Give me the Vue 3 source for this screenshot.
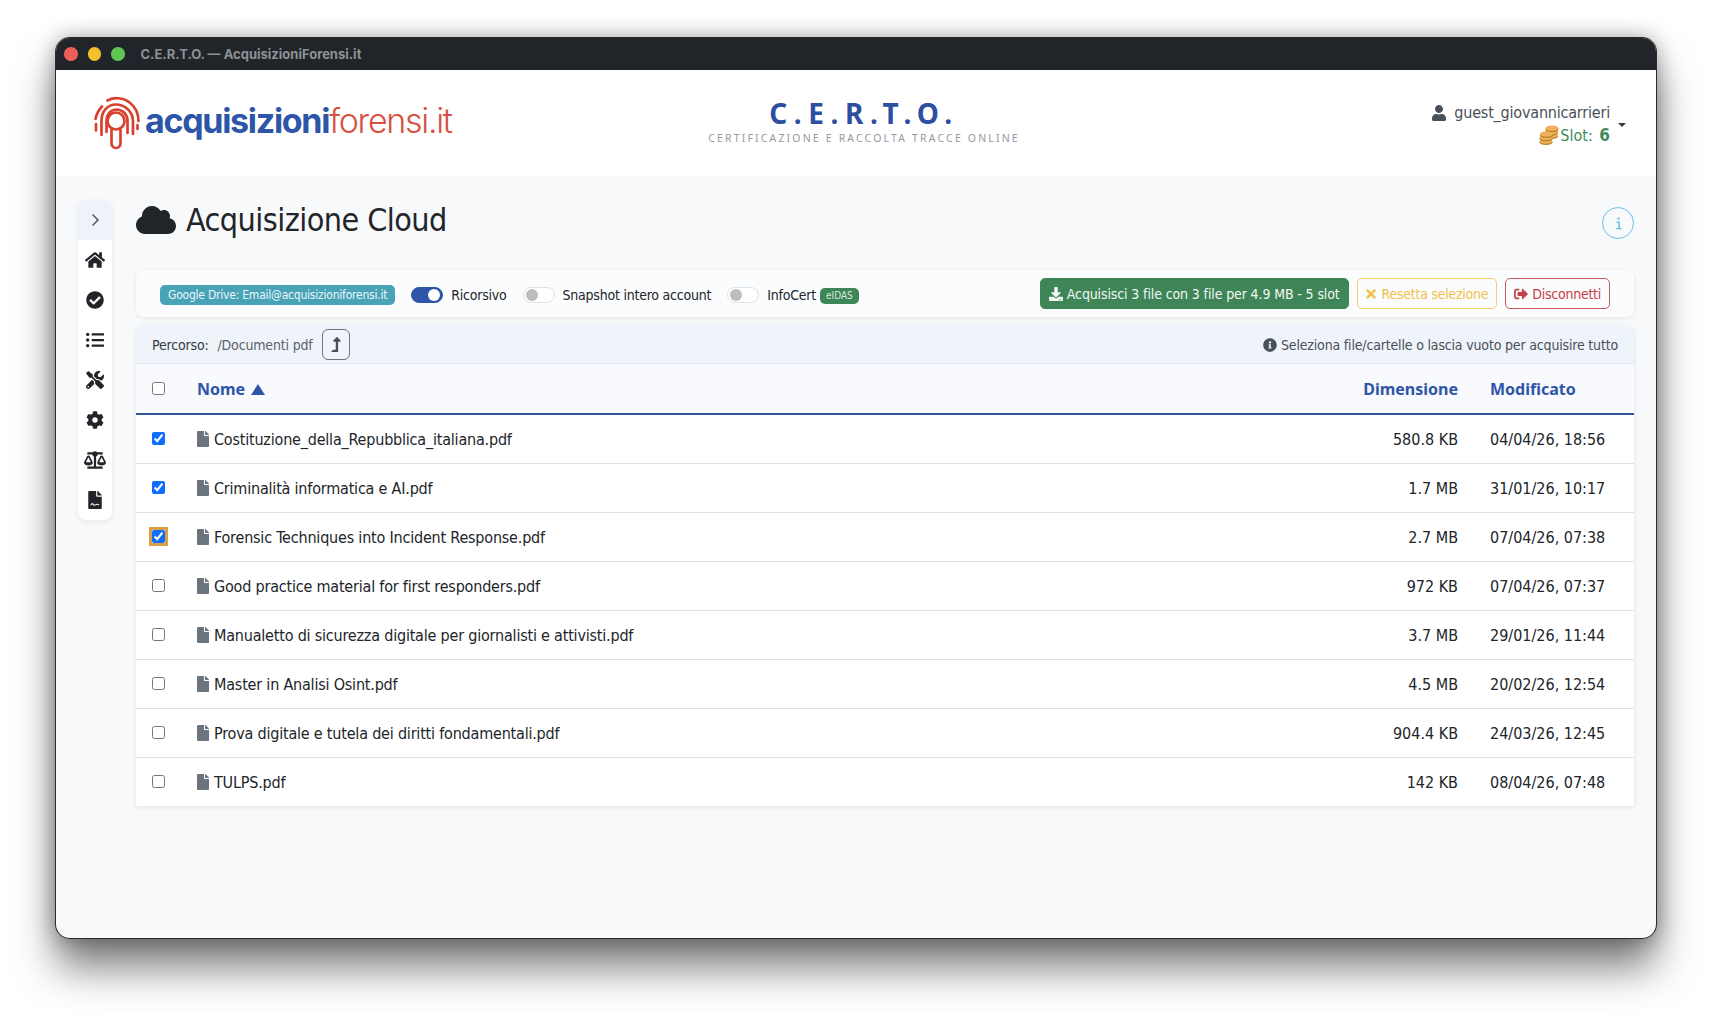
<script setup>
const icons = {
  home: ['0 0 576 512', 'M280.37 148.26L96 300.11V464a16 16 0 0 0 16 16l112.06-.29a16 16 0 0 0 15.92-16V368a16 16 0 0 1 16-16h64a16 16 0 0 1 16 16v95.64a16 16 0 0 0 16 16.05L464 480a16 16 0 0 0 16-16V300L295.67 148.26a12.19 12.19 0 0 0-15.3 0zM571.6 251.47L488 182.56V44.05a12 12 0 0 0-12-12h-56a12 12 0 0 0-12 12v72.61L318.47 43a48 48 0 0 0-61 0L4.34 251.47a12 12 0 0 0-1.6 16.9l25.5 31A12 12 0 0 0 45.15 301l235.22-193.74a12.19 12.19 0 0 1 15.3 0L530.9 301a12 12 0 0 0 16.9-1.6l25.5-31a12 12 0 0 0-1.7-16.93z'],
  check: ['0 0 512 512', 'M504 256c0 136.967-111.033 248-248 248S8 392.967 8 256 119.033 8 256 8s248 111.033 248 248zM227.314 387.314l184-184c6.248-6.248 6.248-16.379 0-22.627l-22.627-22.627c-6.248-6.249-16.379-6.249-22.628 0L216 308.118l-70.059-70.059c-6.248-6.248-16.379-6.248-22.628 0l-22.627 22.627c-6.248 6.248-6.248 16.379 0 22.627l104 104c6.249 6.249 16.379 6.249 22.628.001z'],
  list: ['0 0 512 512', 'M48 48a48 48 0 1 0 48 48 48 48 0 0 0-48-48zm0 160a48 48 0 1 0 48 48 48 48 0 0 0-48-48zm0 160a48 48 0 1 0 48 48 48 48 0 0 0-48-48zm448 16H176a16 16 0 0 0-16 16v32a16 16 0 0 0 16 16h320a16 16 0 0 0 16-16v-32a16 16 0 0 0-16-16zm0-320H176a16 16 0 0 0-16 16v32a16 16 0 0 0 16 16h320a16 16 0 0 0 16-16V80a16 16 0 0 0-16-16zm0 160H176a16 16 0 0 0-16 16v32a16 16 0 0 0 16 16h320a16 16 0 0 0 16-16v-32a16 16 0 0 0-16-16z'],
  tools: ['0 0 512 512', 'M501.1 395.7L384 278.6c-23.1-23.1-57.6-27.6-85.4-13.9L192 158.1V96L64 0 0 64l96 128h62.1l106.6 106.6c-13.6 27.8-9.2 62.3 13.9 85.4l117.1 117.1c14.6 14.6 38.2 14.6 52.7 0l52.7-52.7c14.5-14.6 14.5-38.2 0-52.7zM331.7 225c28.3 0 54.9 11 74.9 31l19.4 19.4c15.8-6.9 30.8-16.5 43.8-29.5 37.1-37.1 49.7-89.3 37.9-136.7-2.2-9-13.5-12.1-20.1-5.5l-74.4 74.4-67.9-11.3L334 98.9l74.4-74.4c6.6-6.6 3.4-17.9-5.7-20.2-47.4-11.7-99.6.9-136.6 37.9-28.5 28.5-41.9 66.1-41.2 103.6l82.1 82.1c8.1-1.9 16.5-2.9 24.7-2.9zm-103.9 82l-56.7-56.7L18.7 402.8c-25 25-25 65.5 0 90.5s65.5 25 90.5 0l123.6-123.6c-7.6-19.9-9.9-41.6-5-62.7zM64 472c-13.2 0-24-10.8-24-24 0-13.3 10.7-24 24-24s24 10.7 24 24c0 13.2-10.7 24-24 24z'],
  cog: ['0 0 512 512', 'M487.4 315.7l-42.6-24.6c4.3-23.2 4.3-47 0-70.2l42.6-24.6c4.9-2.8 7.1-8.6 5.5-14-11.1-35.6-30-67.8-54.7-94.6-3.8-4.1-10-5.1-14.8-2.3L380.8 110c-17.9-15.4-38.5-27.3-60.8-35.1V25.8c0-5.6-3.9-10.5-9.4-11.7-36.7-8.2-74.3-7.8-109.2 0-5.5 1.2-9.4 6.1-9.4 11.7V75c-22.2 7.9-42.8 19.8-60.8 35.1L88.7 85.5c-4.9-2.8-11-1.9-14.8 2.3-24.7 26.7-43.6 58.9-54.7 94.6-1.7 5.4.6 11.2 5.5 14L67.3 221c-4.3 23.2-4.3 47 0 70.2l-42.6 24.6c-4.9 2.8-7.1 8.6-5.5 14 11.1 35.6 30 67.8 54.7 94.6 3.8 4.1 10 5.1 14.8 2.3l42.6-24.6c17.9 15.4 38.5 27.3 60.8 35.1v49.2c0 5.6 3.9 10.5 9.4 11.7 36.7 8.2 74.3 7.8 109.2 0 5.5-1.2 9.4-6.1 9.4-11.7v-49.2c22.2-7.9 42.8-19.8 60.8-35.1l42.6 24.6c4.9 2.8 11 1.9 14.8-2.3 24.7-26.7 43.6-58.9 54.7-94.6 1.5-5.5-.7-11.3-5.6-14.1zM256 336c-44.1 0-80-35.9-80-80s35.9-80 80-80 80 35.9 80 80-35.9 80-80 80z'],
  scale: ['0 0 640 512', 'M256 336h-.02c0-16.18 1.34-8.73-85.05-181.51-17.65-35.29-68.19-35.36-85.87 0C-2.06 328.75.02 320.33.02 336H0c0 44.18 57.31 80 128 80s128-35.82 128-80zM128 176l72 144H56l72-144zm511.98 160c0-16.18 1.34-8.73-85.05-181.51-17.65-35.29-68.19-35.36-85.87 0-87.12 174.26-85.04 165.84-85.04 181.51H384c0 44.18 57.31 80 128 80s128-35.82 128-80h-.02zM440 320l72-144 72 144H440zm88 128H352V153.25c23.51-10.3 41.16-31.48 46.39-57.25H528c8.84 0 16-7.16 16-16V48c0-8.84-7.16-16-16-16H383.64C369.04 12.68 346.09 0 320 0s-49.04 12.68-63.64 32H112c-8.84 0-16 7.16-16 16v32c0 8.84 7.16 16 16 16h129.61c5.23 25.76 22.87 46.95 46.39 57.25V448H112c-8.84 0-16 7.16-16 16v32c0 8.84 7.16 16 16 16h416c8.84 0 16-7.16 16-16v-32c0-8.84-7.16-16-16-16z'],
  file: ['0 0 384 512', 'M224 136V0H24C10.7 0 0 10.7 0 24v464c0 13.3 10.7 24 24 24h336c13.3 0 24-10.7 24-24V160H248c-13.2 0-24-10.8-24-24zM384 121.9V128H256V0h6.1c6.4 0 12.5 2.5 17 7l97.9 98c4.5 4.5 7 10.6 7 16.9z'],
  download: ['0 0 512 512', 'M216 0h80c13.3 0 24 10.7 24 24v168h87.7c17.8 0 26.7 21.5 14.1 34.1L269.7 378.3c-7.5 7.5-19.8 7.5-27.3 0L90.1 226.1c-12.6-12.6-3.7-34.1 14.1-34.1H192V24c0-13.3 10.7-24 24-24zm296 376v112c0 13.3-10.7 24-24 24H24c-13.3 0-24-10.7-24-24V376c0-13.3 10.7-24 24-24h146.7l49 49c20.1 20.1 52.5 20.1 72.6 0l49-49H488c13.3 0 24 10.7 24 24zm-124 88c0-11-9-20-20-20s-20 9-20 20 9 20 20 20 20-9 20-20zm64 0c0-11-9-20-20-20s-20 9-20 20 9 20 20 20 20-9 20-20z'],
  times: ['0 0 352 512', 'M242.72 256l100.07-100.07c12.28-12.28 12.28-32.19 0-44.48l-22.24-22.24c-12.28-12.28-32.19-12.28-44.48 0L176 189.28 75.93 89.21c-12.28-12.28-32.19-12.28-44.48 0L9.21 111.45c-12.28 12.28-12.28 32.19 0 44.48L109.28 256 9.21 356.07c-12.28 12.28-12.28 32.19 0 44.48l22.24 22.24c12.28 12.28 32.2 12.28 44.48 0L176 322.72l100.07 100.07c12.28 12.28 32.2 12.28 44.48 0l22.24-22.24c12.28-12.28 12.28-32.19 0-44.48L242.72 256z'],
  signout: ['0 0 512 512', 'M497 273L329 441c-15 15-41 4.5-41-17v-96H152c-13.3 0-24-10.7-24-24v-96c0-13.3 10.7-24 24-24h136V88c0-21.4 25.9-32 41-17l168 168c9.3 9.4 9.3 24.6 0 34zM192 436v-40c0-6.6-5.4-12-12-12H96c-17.7 0-32-14.3-32-32V160c0-17.7 14.3-32 32-32h84c6.6 0 12-5.4 12-12V76c0-6.6-5.4-12-12-12H96c-53 0-96 43-96 96v192c0 53 43 96 96 96h84c6.6 0 12-5.4 12-12z'],
  info: ['0 0 512 512', 'M256 8C119.043 8 8 119.083 8 256c0 136.997 111.043 248 248 248s248-111.003 248-248C504 119.083 392.957 8 256 8zm0 110c23.196 0 42 18.804 42 42s-18.804 42-42 42-42-18.804-42-42 18.804-42 42-42zm56 254c0 6.627-5.373 12-12 12h-88c-6.627 0-12-5.373-12-12v-24c0-6.627 5.373-12 12-12h12v-64h-12c-6.627 0-12-5.373-12-12v-24c0-6.627 5.373-12 12-12h64c6.627 0 12 5.373 12 12v100h12c6.627 0 12 5.373 12 12v24z'],
  user: ['0 0 448 512', 'M224 256c70.7 0 128-57.3 128-128S294.7 0 224 0 96 57.3 96 128s57.3 128 128 128zm89.6 32h-16.7c-22.2 10.2-46.9 16-72.9 16s-50.6-5.8-72.9-16h-16.7C60.2 288 0 348.2 0 422.4V464c0 26.5 21.5 48 48 48h352c26.5 0 48-21.5 48-48v-41.6c0-74.2-60.2-134.4-134.4-134.4z'],
  cloud: ['0 0 640 512', 'M537.6 226.6c4.1-10.7 6.4-22.4 6.4-34.6 0-53-43-96-96-96-19.7 0-38.1 6-53.3 16.2C367 64.2 315.3 32 256 32c-88.4 0-160 71.6-160 160 0 2.7.1 5.4.2 8.1C40.2 219.8 0 273.2 0 336c0 79.5 64.5 144 144 144h368c70.7 0 128-57.3 128-128 0-61.9-44-113.6-102.4-125.4z'],
  up: ['0 0 320 512', 'M313.553 119.669L209.587 7.666c-9.485-10.214-25.676-10.229-35.174 0L70.438 119.669C56.232 134.969 67.062 160 88.025 160H152v272H68.024a11.996 11.996 0 0 0-8.485 3.515l-56 56C-4.021 499.074 1.333 512 12.024 512h196c13.255 0 24-10.745 24-24V160h63.966c20.878 0 31.851-24.969 17.563-40.331z']
}
const navIcons = ['home', 'check', 'list', 'tools', 'cog', 'scale', 'file']
const coinDiscs = [
  [12.5, 10], [12.5, 6.5], [13, 3.2], [7, 16], [7, 12.5], [7.500, 9]
]
const files = [
  { name: 'Costituzione_della_Repubblica_italiana.pdf', size: '580.8 KB', date: '04/04/26, 18:56', on: true },
  { name: 'Criminalità informatica e AI.pdf', size: '1.7 MB', date: '31/01/26, 10:17', on: true },
  { name: 'Forensic Techniques into Incident Response.pdf', size: '2.7 MB', date: '07/04/26, 07:38', on: true, focus: true },
  { name: 'Good practice material for first responders.pdf', size: '972 KB', date: '07/04/26, 07:37' },
  { name: 'Manualetto di sicurezza digitale per giornalisti e attivisti.pdf', size: '3.7 MB', date: '29/01/26, 11:44' },
  { name: 'Master in Analisi Osint.pdf', size: '4.5 MB', date: '20/02/26, 12:54' },
  { name: 'Prova digitale e tutela dei diritti fondamentali.pdf', size: '904.4 KB', date: '24/03/26, 12:45' },
  { name: 'TULPS.pdf', size: '142 KB', date: '08/04/26, 07:48' }
]
</script>

<template>
  <div class="page">
    <div class="window">
      <div class="titlebar">
        <span class="light red"></span><span class="light yellow"></span><span class="light green"></span>
        <span class="wintitle">C.E.R.T.O. — AcquisizioniForensi.it</span>
      </div>

      <header class="header">
        <div class="logo">
          <svg class="mark" viewBox="0 0 56 58">
            <path d="M19.500 6.500C26 3 35 3.500 41 8C47 12.500 50.500 19 50.500 27" />
            <path d="M7.500 25C8.500 20 10.500 16 14 12.500" />
            <path d="M13.500 41V27C13.500 16.500 20 10.500 28 10.500C36 10.500 44.500 16.500 45 27V40" />
            <path d="M8 30V36.500M49.500 31V35" />
            <path d="M18.500 38V27C18.500 20.500 22.500 15.500 28.500 15.500C34.500 15.500 39.500 20.500 39.500 27V39" />
            <circle cx="28" cy="27" r="8.500" />
            <path d="M23.500 36V49C23.500 52 25.500 54 28 54C30.500 54 32.500 52 32.500 49V36" />
          </svg>
          <span class="logotext"><b>acquisizioni</b><span>forensi.it</span></span>
        </div>
        <div class="brand">
          <div class="brandname">C.E.R.T.O.</div>
          <div class="brandsub">CERTIFICAZIONE E RACCOLTA TRACCE ONLINE</div>
        </div>
        <div class="account">
          <div class="accountlines">
            <div class="username">
              <svg class="ico-user" :viewBox="icons.user[0]"><path :d="icons.user[1]" /></svg>
              <span>guest_giovannicarrieri</span>
            </div>
            <div class="slots">
              <svg class="ico-coins" viewBox="0 0 20 20">
                <g v-for="(d, i) in coinDiscs" :key="i">
                  <ellipse :cx="d[0]" :cy="d[1] + 1.2" rx="6.500" ry="2.800" fill="#b87e2a" />
                  <ellipse :cx="d[0]" :cy="d[1]" rx="6.500" ry="2.800" fill="#efb25c" />
                </g>
              </svg>
              <span>Slot: <b>6</b></span>
            </div>
          </div>
          <span class="caret"></span>
        </div>
      </header>

      <div class="main">
        <nav class="sidebar">
          <div class="toggle">
            <svg viewBox="0 0 16 16"><path d="M5.500 2.500 11 8l-5.500 5.500" fill="none" stroke="#444c54" stroke-width="1.400" /></svg>
          </div>
          <div class="navlist">
            <div v-for="n in navIcons" :key="n" class="navitem">
              <svg :class="'nav-' + n" :viewBox="icons[n][0]"><path :d="icons[n][1]" /><path v-if="n === 'file'" d="M70 400c30-50 50-50 70-20s40 30 70 5 60-10 100 10" fill="none" stroke="#fff" stroke-width="30" /></svg>
            </div>
          </div>
        </nav>

        <section class="content">
          <div class="headline">
            <div class="pagetitle">
              <svg class="ico-cloud" :viewBox="icons.cloud[0]"><path :d="icons.cloud[1]" /></svg>
              <h1>Acquisizione Cloud</h1>
            </div>
            <div class="infobtn">
              <svg viewBox="0 0 16 16"><circle cx="8" cy="2.800" r="1.200" fill="#5bbfdd" /><path d="M5.800 6.500H8.700V13.500M5.600 13.500H11" fill="none" stroke="#5bbfdd" stroke-width="1.500" /></svg>
            </div>
          </div>

          <div class="toolbar">
            <div class="options">
              <span class="drive">Google Drive: Email@acquisizioniforensi.it</span>
              <label class="opt"><span class="switch on"></span>Ricorsivo</label>
              <label class="opt"><span class="switch"></span>Snapshot intero account</label>
              <label class="opt"><span class="switch"></span>InfoCert <span class="eidas">eIDAS</span></label>
            </div>
            <div class="actions">
              <button class="btn go">
                <svg :viewBox="icons.download[0]"><path :d="icons.download[1]" /></svg>
                Acquisisci 3 file con 3 file per 4.9 MB - 5 slot
              </button>
              <button class="btn reset">
                <svg class="x" :viewBox="icons.times[0]"><path :d="icons.times[1]" /></svg>
                Resetta selezione
              </button>
              <button class="btn off">
                <svg :viewBox="icons.signout[0]"><path :d="icons.signout[1]" /></svg>
                Disconnetti
              </button>
            </div>
          </div>

          <div class="panel">
            <div class="pathbar">
              <div class="pathleft">
                <span class="pathlabel">Percorso:</span>
                <span class="pathval">/Documenti pdf</span>
                <button class="upbtn"><svg :viewBox="icons.up[0]"><path :d="icons.up[1]" /></svg></button>
              </div>
              <div class="hint">
                <svg :viewBox="icons.info[0]"><path :d="icons.info[1]" /></svg>
                <span>Seleziona file/cartelle o lascia vuoto per acquisire tutto</span>
              </div>
            </div>
            <div class="thead">
              <div class="c-check"><input type="checkbox" class="cb" /></div>
              <div class="c-name">Nome <span class="sort"></span></div>
              <div class="c-size">Dimensione</div>
              <div class="c-date">Modificato</div>
            </div>
            <div v-for="f in files" :key="f.name" class="row">
              <div class="c-check"><input type="checkbox" class="cb" :class="{ focus: f.focus }" :checked="f.on" /></div>
              <div class="c-name rowname">
                <svg class="ico-file" :viewBox="icons.file[0]"><path :d="icons.file[1]" /></svg>
                <span>{{ f.name }}</span>
              </div>
              <div class="c-size">{{ f.size }}</div>
              <div class="c-date">{{ f.date }}</div>
            </div>
          </div>
        </section>
      </div>
    </div>
  </div>
</template>

<style>
html, body { margin: 0; background: #fff; }
</style>

<style scoped>
.page {
  width: 1712px;
  height: 1012px;
  padding-top: 38px;
  box-sizing: border-box;
  background: #fff;
  overflow: hidden;
  font-family: "DejaVu Sans Condensed", "Noto Sans", sans-serif;
  color: #212529;
}
svg { display: block; fill: currentColor; }
.window {
  width: 1600px;
  height: 900px;
  margin: 0 auto;
  border-radius: 14px;
  overflow: hidden;
  background: #f8f9fb;
  box-shadow: 0 0 0 1px #2a2a2a, 0 30px 40px rgba(0,0,0,.5), 0 0 22px rgba(0,0,0,.36);
  display: flex;
  flex-direction: column;
}
.titlebar {
  height: 32px;
  background: #212529;
  display: flex;
  align-items: center;
  padding-left: 8px;
  gap: 10px;
  flex: none;
}
.light { width: 13.5px; height: 13.5px; border-radius: 50%; }
.red { background: #ec5f57; }
.yellow { background: #f5bf2e; }
.green { background: #5fc454; }
.wintitle {
  margin-left: 6px;
  font: 700 13px "Inter", sans-serif;
  color: #8d9195;
}
.header {
  height: 106px;
  flex: none;
  background: #fff;
  display: grid;
  grid-template-columns: 1fr auto 1fr;
  align-items: center;
  padding: 0 30px 0 32px;
}
.logo { display: flex; align-items: center; gap: 1px; }
.mark {
  width: 56px;
  height: 58px;
  fill: none;
  stroke: #d8412f;
  stroke-width: 2.700;
  stroke-linecap: round;
}
.logotext {
  font-family: "Inter", sans-serif;
  font-size: 34px;
  letter-spacing: -1.3px;
  color: #d8503f;
  font-weight: 300;
  margin-top: -5px;
}
.logotext b { color: #2d55a8; font-weight: 700; }
.brand { text-align: center; margin: -7px 0 0 14px; }
.brandname {
  color: #2c4fa1;
  font: 700 28px/36px "Noto Sans", sans-serif;
  letter-spacing: 6.6px;
}
.brandsub {
  color: #959a9f;
  font: 400 10.5px/14px "Noto Sans", sans-serif;
  letter-spacing: 2.17px;
}
.account { justify-self: end; display: flex; align-items: flex-end; margin-top: 1px; }
.accountlines { display: flex; flex-direction: column; align-items: flex-end; gap: 0; }
.username, .slots { display: flex; align-items: center; height: 22px; font-size: 16px; }
.username { color: #495057; letter-spacing: -.2px; }
.slots { color: #3e8a5c; font-size: 16px; }
.slots b { font-weight: 700; font-size: 17px; margin-left: 2px; }
.ico-user { width: 14px; height: 16px; color: #495057; margin-right: 8px; }
.ico-coins { width: 20px; height: 20px; margin-right: 1px; }
.caret {
  width: 0; height: 0;
  border: 4px solid transparent;
  border-top-color: #343a40;
  border-bottom: 0;
  margin: 0 0 19px 8px;
}
.main {
  flex: 1;
  display: flex;
  gap: 24px;
  padding: 24px 22px 0;
  min-height: 0;
}
.sidebar {
  width: 34px;
  height: 320px;
  flex: none;
  background: #fff;
  border-radius: 8px;
  box-shadow: 0 2px 6px rgba(0,0,0,.07);
  overflow: hidden;
}
.toggle {
  height: 40px;
  background: #eef3fb;
  display: flex;
  align-items: center;
  justify-content: center;
}
.toggle svg { width: 16px; height: 16px; }
.navitem { height: 40px; display: flex; align-items: center; justify-content: center; color: #212529; }
.navitem svg { width: 20px; height: 18px; }
.navitem .nav-check { width: 18px; height: 18px; }
.navitem .nav-file { width: 14px; height: 18px; }
.navitem .nav-scale { width: 22px; height: 18px; }
.content { flex: 1; min-width: 0; display: flex; flex-direction: column; }
.headline {
  height: 70px;
  flex: none;
  display: flex;
  justify-content: space-between;
  align-items: flex-start;
}
.pagetitle { display: flex; align-items: center; gap: 10px; height: 40px; }
.ico-cloud { width: 40px; height: 32px; color: #212529; }
h1 { margin: 0; font-size: 32px; font-weight: 400; line-height: 40px; color: #212529; letter-spacing: -.55px; }
.infobtn {
  width: 32px; height: 32px;
  border: 1px solid #6cc5e4;
  border-radius: 50%;
  margin-top: 7px;
  box-sizing: border-box;
  display: flex; align-items: center; justify-content: center;
}
.infobtn svg { width: 15px; height: 15px; }
.toolbar {
  height: 47px;
  flex: none;
  background: #fbfcfd;
  border-radius: 8px;
  box-shadow: 0 1px 4px rgba(0,0,0,.08);
  display: flex;
  align-items: center;
  justify-content: space-between;
  padding: 0 24px;
  box-sizing: border-box;
}
.options { display: flex; align-items: center; gap: 16px; font-size: 14px; letter-spacing: -.22px; margin-top: 2px; }
.drive {
  background: #48a3b7;
  color: #eaf6f8;
  font-size: 12px;
  line-height: 20px;
  border-radius: 5px;
  padding: 0 8px;
}
.opt { display: flex; align-items: center; gap: 8px; color: #212529; }
.switch {
  width: 32px; height: 16px;
  border-radius: 8px;
  border: 1px solid #dfe2e5;
  background: #fff;
  box-sizing: border-box;
  position: relative;
}
.switch::after {
  content: "";
  position: absolute;
  left: 2px; top: 1px;
  width: 12px; height: 12px;
  border-radius: 50%;
  background: #bdbdbd;
}
.switch.on { background: #2d55a8; border-color: #2d55a8; }
.switch.on::after { left: auto; right: 2px; background: #fff; }
.eidas {
  background: #3e8557;
  color: #d9ebdf;
  font-size: 10px;
  line-height: 16px;
  letter-spacing: 0;
  border-radius: 5px;
  padding: 0 6px;
  margin: 3px 0 0 -4px;
}
.actions { display: flex; gap: 8px; }
.btn {
  height: 31px;
  padding: 0 8px;
  border-radius: 5px;
  font: 400 14px "DejaVu Sans Condensed", "Noto Sans", sans-serif;
  letter-spacing: -.25px;
  display: flex;
  align-items: center;
  gap: 4px;
  background: transparent;
  border: 1px solid;
  box-sizing: border-box;
  white-space: nowrap;
}
.btn svg { width: 14px; height: 14px; }
.btn .x { width: 10px; height: 14px; margin-right: 2px; }
.go { background: #3e8557; border-color: #3e8557; color: #f3f8f5; letter-spacing: -.12px; }
.reset { border-color: #f3cf6a; color: #f0c14a; }
.off { border-color: #c95a5f; color: #c4414a; }
.panel { margin-top: 8px; background: #fff; border-radius: 8px 8px 0 0; box-shadow: 0 1px 4px rgba(0,0,0,.1); }
.pathbar {
  height: 39px;
  box-sizing: border-box;
  background: #eff3fa;
  border-bottom: 1px solid #dfe6f3;
  border-radius: 8px 8px 0 0;
  display: flex;
  align-items: center;
  justify-content: space-between;
  padding: 0 16px;
  font-size: 14px;
  letter-spacing: -.17px;
}
.pathleft { display: flex; align-items: center; }
.pathlabel { color: #343a40; margin-top: 2px; }
.pathval { color: #5c636a; margin: 2px 9px 0; }
.upbtn {
  width: 28px; height: 31px;
  border: 1px solid #6c757d;
  border-radius: 6px;
  background: transparent;
  display: flex; align-items: center; justify-content: center;
  color: #495057;
  padding: 0;
}
.upbtn svg { width: 10px; height: 15px; }
.hint { display: flex; align-items: center; gap: 4px; color: #495057; margin-top: 2px; }
.hint svg { width: 14px; height: 14px; }
.thead, .row {
  display: grid;
  grid-template-columns: 61px 1fr 146px 176px;
  align-items: center;
}
.thead {
  height: 51px;
  box-sizing: border-box;
  background: #f8fafd;
  border-bottom: 2px solid #2d5593;
  color: #2d55a8;
  font: 700 16px "Noto Sans", sans-serif;
}
.row { height: 49px; box-sizing: border-box; border-bottom: 1px solid #dee2e6; font-size: 16px; background: #fff; color: #212529; }
.row:last-child { border-bottom: 0; height: 48px; }
.c-check { padding-left: 16px; display: flex; align-items: center; }
.row .c-check { margin-top: -2px; }
.c-size { text-align: right; }
.c-date { padding-left: 32px; }
.cb {
  width: 13px; height: 13px; margin: 0;
  accent-color: #0d6efd;
}
.cb.focus { outline: 3px solid #dba044; outline-offset: 0; border-radius: 3px; }
.sort {
  display: inline-block;
  width: 0; height: 0;
  border-left: 7px solid transparent;
  border-right: 7px solid transparent;
  border-bottom: 11px solid #2d55a8;
  margin-left: 2px;
}
.rowname { display: flex; align-items: center; gap: 5px; letter-spacing: -.2px; }
.ico-file { width: 12px; height: 16px; color: #6c757d; }
</style>
